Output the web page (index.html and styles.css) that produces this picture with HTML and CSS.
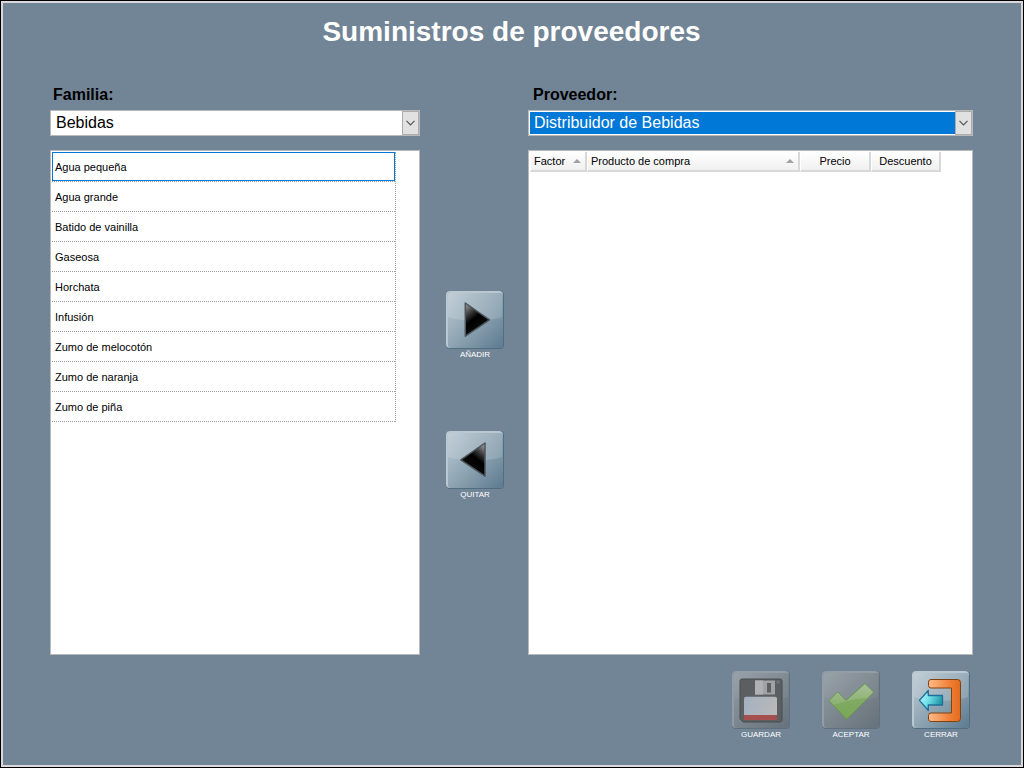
FILE: index.html
```html
<!DOCTYPE html>
<html lang="es">
<head>
    <meta charset="UTF-8">
    <meta name="viewport" content="width=device-width, initial-scale=1.0">
    <title>Suministros de proveedores</title>
    <link rel="stylesheet" href="styles.css">
</head>
<body>
    <!-- Degradados y fondos comunes de los botones -->
    <svg class="defs" width="0" height="0" aria-hidden="true">
        <defs>
            <linearGradient id="glass" x1="0" y1="0" x2="1" y2="1">
                <stop offset="0" stop-color="#bccad3"/>
                <stop offset="0.5" stop-color="#8fa5b3"/>
                <stop offset="1" stop-color="#5c7a8f"/>
            </linearGradient>
            <linearGradient id="glass-off" x1="0" y1="0" x2="1" y2="1">
                <stop offset="0" stop-color="#939da5"/>
                <stop offset="0.5" stop-color="#7b858d"/>
                <stop offset="1" stop-color="#66727c"/>
            </linearGradient>
            <linearGradient id="gloss" x1="0" y1="0" x2="0" y2="1">
                <stop offset="0" stop-color="#fff" stop-opacity="0.08"/>
                <stop offset="1" stop-color="#fff" stop-opacity="0.16"/>
            </linearGradient>
            <linearGradient id="black" x1="0" y1="0" x2="0.6" y2="1">
                <stop offset="0" stop-color="#a5a5a5"/>
                <stop offset="0.3" stop-color="#3c3c3c"/>
                <stop offset="0.5" stop-color="#000"/>
                <stop offset="1" stop-color="#111"/>
            </linearGradient>
            <linearGradient id="black-left" x1="1" y1="0" x2="0.4" y2="1">
                <stop offset="0" stop-color="#b5b5b5"/>
                <stop offset="0.3" stop-color="#3c3c3c"/>
                <stop offset="0.5" stop-color="#000"/>
                <stop offset="1" stop-color="#111"/>
            </linearGradient>
            <linearGradient id="orange" x1="0" y1="0" x2="1" y2="0">
                <stop offset="0" stop-color="#ffbb8c"/>
                <stop offset="0.65" stop-color="#f08138"/>
                <stop offset="1" stop-color="#e26a1c"/>
            </linearGradient>
            <linearGradient id="cyan" x1="0" y1="0" x2="1" y2="0.4">
                <stop offset="0" stop-color="#c4fbff"/>
                <stop offset="0.5" stop-color="#6fe0e8"/>
                <stop offset="1" stop-color="#2499a8"/>
            </linearGradient>
            <linearGradient id="green" x1="0" y1="0" x2="0" y2="1">
                <stop offset="0" stop-color="#9bb98c"/>
                <stop offset="0.5" stop-color="#80a964"/>
                <stop offset="1" stop-color="#78a854"/>
            </linearGradient>
            <linearGradient id="paper" x1="0" y1="0" x2="1" y2="0.3">
                <stop offset="0" stop-color="#a4b0c0"/>
                <stop offset="1" stop-color="#b7b9bb"/>
            </linearGradient>
            <g id="base">
                <rect width="58" height="58" rx="4" fill="#506e82"/>
                <rect width="57" height="57" rx="4" fill="#b9c8d1"/>
                <rect x="2" y="2" width="55" height="55" rx="3" fill="url(#glass)"/>
                <path d="M2 5a3 3 0 0 1 3-3h48a3 3 0 0 1 3 3v21C40 31 18 31 2 26z" fill="url(#gloss)"/>
            </g>
            <g id="base-off">
                <rect width="58" height="58" rx="4" fill="#61707c"/>
                <rect width="57" height="57" rx="4" fill="#929ca4"/>
                <rect x="2" y="2" width="55" height="55" rx="3" fill="url(#glass-off)"/>
                <path d="M2 5a3 3 0 0 1 3-3h48a3 3 0 0 1 3 3v21C40 31 18 31 2 26z" fill="#fff" fill-opacity="0.05"/>
            </g>
        </defs>
    </svg>

    <main class="window">
        <h1>Suministros de proveedores</h1>
        <div class="content">
            <section class="column">
                <label for="familia">Familia:</label>
                <div class="combo">
                    <select id="familia">
                        <option>Bebidas</option>
                    </select>
                    <span class="arrow"><svg width="9" height="6" viewBox="0 0 9 6"><path d="M0.5 0.8 4.5 4.8 8.5 0.8" fill="none" stroke="#555" stroke-width="1.2"/></svg></span>
                </div>
                <div class="panel">
                    <ul class="products">
                        <li class="selected">Agua pequeña</li>
                        <li>Agua grande</li>
                        <li>Batido de vainilla</li>
                        <li>Gaseosa</li>
                        <li>Horchata</li>
                        <li>Infusión</li>
                        <li>Zumo de melocotón</li>
                        <li>Zumo de naranja</li>
                        <li>Zumo de piña</li>
                    </ul>
                </div>
            </section>

            <div class="actions">
                <button type="button" class="tool">
                    <svg width="58" height="58" viewBox="0 0 58 58">
                        <use href="#base"/>
                        <path d="M19.3 12 43.5 28.8 19.3 45.2z" fill="url(#black)" stroke="#4b555c" stroke-width="1.5" stroke-linejoin="round"/>
                    </svg>
                    <span>AÑADIR</span>
                </button>
                <button type="button" class="tool">
                    <svg width="58" height="58" viewBox="0 0 58 58">
                        <use href="#base"/>
                        <path d="M39 12 14.8 28.8 39 45.2z" fill="url(#black-left)" stroke="#4b555c" stroke-width="1.5" stroke-linejoin="round"/>
                    </svg>
                    <span>QUITAR</span>
                </button>
            </div>

            <section class="column supplier">
                <label for="proveedor">Proveedor:</label>
                <div class="combo active">
                    <select id="proveedor">
                        <option>Distribuidor de Bebidas</option>
                    </select>
                    <span class="arrow"><svg width="9" height="6" viewBox="0 0 9 6"><path d="M0.5 0.8 4.5 4.8 8.5 0.8" fill="none" stroke="#555" stroke-width="1.2"/></svg></span>
                </div>
                <div class="panel">
                    <table class="supplies">
                        <thead>
                            <tr>
                                <th class="factor sorted">Factor</th>
                                <th class="product sorted">Producto de compra</th>
                                <th class="price">Precio</th>
                                <th class="discount">Descuento</th>
                            </tr>
                        </thead>
                        <tbody></tbody>
                    </table>
                </div>
            </section>
        </div>

        <div class="footer">
            <button type="button" class="tool" disabled>
                <svg width="58" height="58" viewBox="0 0 58 58">
                    <use href="#base-off"/>
                    <path d="M10 8h38a2 2 0 0 1 2 2v39a2 2 0 0 1-2 2H11l-3-3V10a2 2 0 0 1 2-2z" fill="#5b5f62" stroke="#4a4e51" stroke-width="1"/>
                    <rect x="23" y="9.5" width="20" height="14" fill="#a0a3a5"/>
                    <rect x="23" y="9.5" width="8" height="14" fill="#afb1b3"/>
                    <rect x="35" y="12" width="4" height="9.5" fill="#5b6063"/>
                    <rect x="44.5" y="9.5" width="3" height="3" fill="#6f7376"/>
                    <path d="M14 25.7h29a2 2 0 0 1 2 2V49H12V27.7a2 2 0 0 1 2-2z" fill="url(#paper)"/>
                    <rect x="12" y="44" width="33" height="5" fill="#a5504e"/>
                </svg>
                <span>GUARDAR</span>
            </button>
            <button type="button" class="tool" disabled>
                <svg width="58" height="58" viewBox="0 0 58 58">
                    <use href="#base-off"/>
                    <path d="M7 29.7 15.7 20.7 24 29.3 43 12.5 52 21.3 24.7 48.3z" fill="url(#green)" stroke="#6c9353" stroke-width="1" stroke-linejoin="round"/>
                    <path d="M7.5 29.5 15.7 21.3 24 29.9 43 13.2 51 21.2 45 27C34 27 21 31 12 34z" fill="#fff" fill-opacity="0.12"/>
                </svg>
                <span>ACEPTAR</span>
            </button>
            <button type="button" class="tool">
                <svg width="58" height="58" viewBox="0 0 58 58">
                    <use href="#base"/>
                    <path d="M19 8.500h26.500a3 3 0 0 1 3 3v36a3 3 0 0 1-3 3H19a2.500 2.500 0 0 1-2.500-2.500v-3.500a2.500 2.500 0 0 1 2.500-2.500h20.500v-25H19a2.500 2.500 0 0 1-2.500-2.500v-3.500A2.500 2.500 0 0 1 19 8.500z" fill="url(#orange)" stroke="#80430f" stroke-width="1"/>
                    <path d="M7.500 29.300 16.300 19.500v5H30.500v9.500H16.300v5.500z" fill="url(#cyan)" stroke="#1f6f9c" stroke-width="1.300" stroke-linejoin="round"/>
                </svg>
                <span>CERRAR</span>
            </button>
        </div>
    </main>
</body>
</html>
```
FILE: styles.css
```css
* {
    box-sizing: border-box;
}
body {
    font-family: "Liberation Sans", Arial, sans-serif;
    margin: 0;
    background-color: #728596;
    color: black;
}
.defs {
    position: absolute;
}
.window {
    min-height: 100vh;
    display: flex;
    flex-direction: column;
    padding: 15px 50px 26px 49px;
    border: 1px solid black;
    box-shadow: inset 0 0 0 2px #dcd8d8;
}
h1 {
    margin: 0 0 37px;
    font-size: 28px;
    line-height: 32px;
    color: white;
    text-align: center;
}
.content {
    flex: 1;
    display: grid;
    grid-template-columns: 370fr 108px 445fr;
}
.column {
    display: flex;
    flex-direction: column;
}
.column label {
    font-size: 16px;
    font-weight: bold;
    line-height: 20px;
    margin-bottom: 5px;
    padding-left: 3px;
}
.supplier label {
    padding-left: 5px;
}

/* Desplegables */
.combo {
    position: relative;
    height: 26px;
    margin-bottom: 14px;
    padding: 1px;
    background-color: white;
    border: 1px solid #b9b9b9;
}
.combo select {
    display: block;
    width: 100%;
    height: 100%;
    padding: 0 18px 2px 4px;
    appearance: none;
    border: none;
    border-radius: 0;
    outline: none;
    background-color: white;
    font-family: inherit;
    font-size: 16px;
    color: black;
}
.combo.active select {
    background-color: #0078d7;
    color: white;
}
.combo .arrow {
    position: absolute;
    top: 0;
    right: 0;
    width: 17px;
    height: 24px;
    display: flex;
    align-items: center;
    justify-content: center;
    background-color: #e1e1e1;
    border: 1px solid #adadad;
    pointer-events: none;
}

.panel {
    flex: 1;
    padding: 1px;
    background-color: white;
    border: 1px solid #b9b9b9;
}
.products {
    list-style: none;
    margin: 0 22px 0 0;
    padding: 0;
    border-right: 1px dotted #a0a0a0;
}
.products li {
    height: 30px;
    padding-left: 3px;
    border-bottom: 1px dotted #a0a0a0;
    font-size: 11px;
    line-height: 30px;
    cursor: pointer;
}
.products li.selected {
    box-shadow: inset 0 0 0 1px #0078d7;
}

.supplies {
    border-collapse: separate;
    border-spacing: 0;
    table-layout: fixed;
    width: 411px;
}
.supplies th {
    height: 19px;
    padding: 1px 0 0;
    font-size: 11px;
    font-weight: normal;
    line-height: 17px;
    background: linear-gradient(white, #f0f0f0);
    border-left: 1px solid white;
    border-right: 2px solid #d8d8d8;
    border-bottom: 2px solid #d8d8d8;
}
.supplies th.sorted {
    position: relative;
    padding-left: 3px;
    text-align: left;
}
.supplies th.sorted::after {
    content: "";
    position: absolute;
    top: 7px;
    right: 4px;
    border: 4px solid transparent;
    border-top: none;
    border-bottom-color: #a0a0a0;
}
.factor {
    width: 57px;
}
.product {
    width: 213px;
}
.price {
    width: 71px;
}
.discount {
    width: 70px;
}

/* Botones */
.tool {
    width: 58px;
    padding: 0;
    border: none;
    background: none;
    font-family: inherit;
    font-size: 8px;
    line-height: 12px;
    color: white;
    cursor: pointer;
}
.tool:disabled {
    cursor: default;
}
.tool svg,
.tool span {
    display: block;
}
.actions {
    display: flex;
    flex-direction: column;
    align-items: center;
    justify-content: center;
    gap: 70px;
    padding: 52px 0 0 2px;
}
.footer {
    display: flex;
    justify-content: flex-end;
    gap: 32px;
    margin-top: 16px;
    padding-right: 3px;
}
```
